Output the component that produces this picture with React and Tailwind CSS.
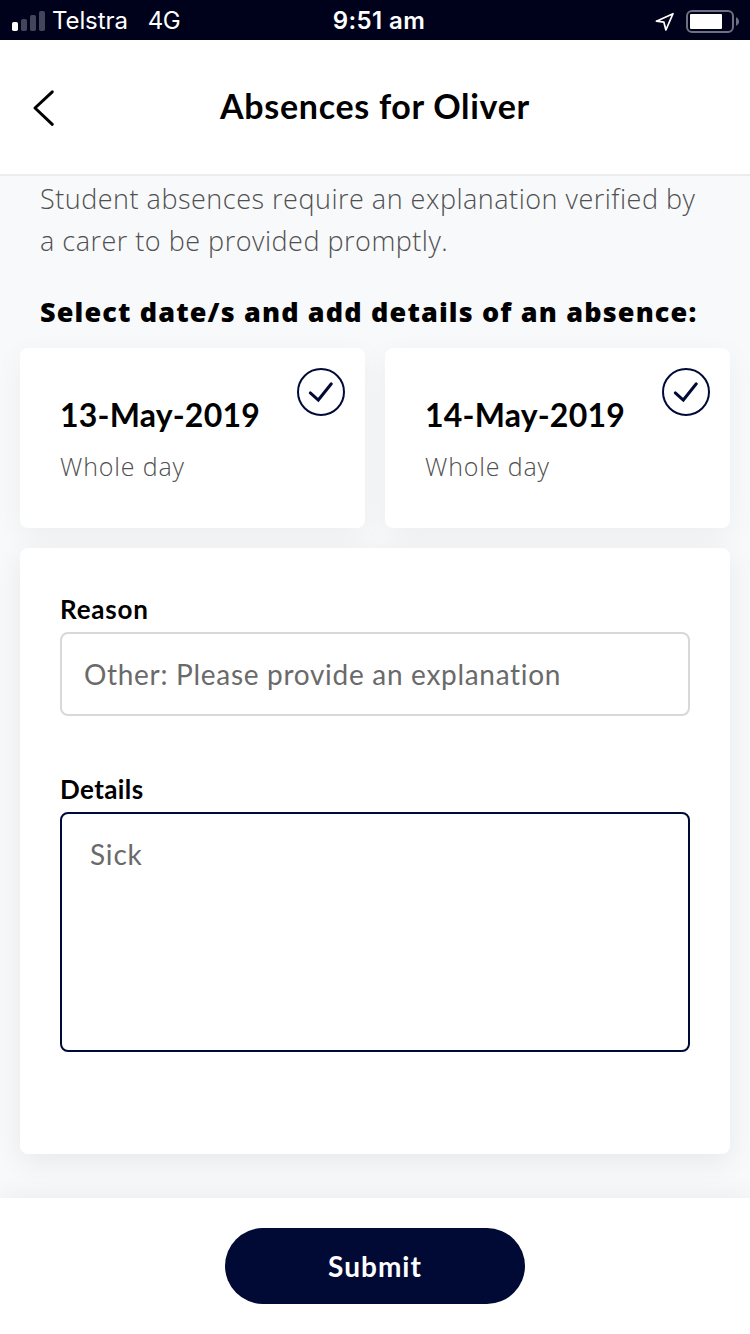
import React from 'react';

function SignalIcon() {
  return (
    <svg className="h-5 w-[33px] shrink-0" viewBox="0 0 33 20">
      <rect x="0" y="11" width="6" height="9" rx="1.8" fill="#fff" />
      <rect x="9" y="8" width="6" height="12" rx="1.8" fill="#43455a" />
      <rect x="18" y="4" width="6" height="16" rx="1.8" fill="#43455a" />
      <rect x="27" y="0" width="6" height="20" rx="1.8" fill="#43455a" />
    </svg>
  );
}

function LocationIcon() {
  return (
    <svg className="h-5 w-5 shrink-0" viewBox="0 0 20 20" fill="none" stroke="#fff" strokeWidth="1.7" strokeLinejoin="round">
      <path d="M18 2.700 L1.400 10.200 L8.900 11.200 L10.900 19 Z" />
    </svg>
  );
}

function BatteryIcon() {
  return (
    <svg className="h-6 w-[54px] shrink-0" viewBox="0 0 54 24" fill="none">
      <rect x="1" y="2" width="46" height="21" rx="5" stroke="#6f7183" strokeWidth="2" />
      <rect x="4" y="5" width="32" height="15" rx="1" fill="#fff" />
      <path d="M50 8.200 C52 9 53 10.500 53 12.500 C53 14.500 52 16 50 16.800 Z" fill="#6f7183" />
    </svg>
  );
}

function StatusBar() {
  return (
    <div className="grid h-10 grid-cols-3 items-center bg-[#00021c] font-['Inter','Liberation_Sans',sans-serif] text-2xl leading-10 text-white">
      <div className="flex items-center pl-3">
        <SignalIcon />
        <span className="pt-px pl-[7px] tracking-[-0.1px]">Telstra</span>
        <span className="pt-px pl-5 tracking-[-0.6px]">4G</span>
      </div>
      <div className="pt-px pl-2 text-center font-semibold tracking-[0.4px]">9:51 am</div>
      <div className="flex items-center justify-end gap-[11px] pr-[10px]">
        <LocationIcon />
        <BatteryIcon />
      </div>
    </div>
  );
}

function DateCard({ date, duration }) {
  return (
    <div className="flex h-[180px] flex-1 justify-between rounded-lg bg-white pr-5 pl-10 shadow-[0_8px_30px_rgba(0,0,0,0.05)]">
      <div className="pt-[47px]">
        <div className="text-[32px] leading-10 font-bold tracking-[0.2px] text-black">{date}</div>
        <div className="pt-[13px] font-['Open_Sans',sans-serif] text-[25px] leading-9 font-light tracking-[0.850px] text-[#505050]">{duration}</div>
      </div>
      <svg className="mt-5 size-12 shrink-0" viewBox="0 0 48 48" fill="none" stroke="#000a35">
        <circle cx="24" cy="24" r="23" strokeWidth="2" />
        <path d="M13.300 24.900 L21.300 32 L34.300 15.800" strokeWidth="3" strokeLinecap="round" />
      </svg>
    </div>
  );
}

export default function App() {
  return (
    <div className="flex h-[1334px] w-[750px] flex-col overflow-hidden bg-[#f8f9fb] font-['Lato','Open_Sans',sans-serif]">
      <StatusBar />
      <header className="grid h-[136px] grid-cols-[60px_1fr_60px] items-center border-b-2 border-[#ececec] bg-white">
        <svg className="mt-0.5 ml-8 h-[38px] w-6" viewBox="0 0 24 38" fill="none" stroke="#000" strokeWidth="3" strokeLinecap="round" strokeLinejoin="round">
          <path d="M20.300 2.800 L3 19 L20.300 35.300" />
        </svg>
        <h1 className="pb-0.5 text-center text-[34px] leading-10 font-bold tracking-[0.7px] text-black">Absences for Oliver</h1>
      </header>
      <main className="flex flex-1 flex-col px-5">
        <p className="px-5 pt-[2px] font-['Open_Sans',sans-serif] text-[27px] leading-[42px] font-light tracking-[0.500px] whitespace-nowrap text-[#505050]">
          Student absences require an explanation verified by
          <br />a carer to be provided promptly.
        </p>
        <h2 className="px-5 pt-[30px] font-['Open_Sans',sans-serif] text-[27px] leading-10 font-extrabold tracking-[1.150px] whitespace-nowrap text-black">
          Select date/s and add details of an absence:
        </h2>
        <section className="flex gap-5 pt-4">
          <DateCard date="13-May-2019" duration="Whole day" />
          <DateCard date="14-May-2019" duration="Whole day" />
        </section>
        <section className="mt-5 flex h-[606px] flex-col rounded-lg bg-white px-10 pt-[43px] shadow-[0_8px_30px_rgba(0,0,0,0.07)]">
          <label className="text-[26px] leading-9 font-bold tracking-[0.8px] text-black">Reason</label>
          <div className="mt-[5px] flex h-[84px] items-center rounded-lg border-2 border-[#d8d8d8] px-[22px] text-[28px] leading-10 font-normal tracking-[0.7px] text-[#6a6a6a]">
            Other: Please provide an explanation
          </div>
          <label className="mt-[55px] text-[26px] leading-9 font-bold tracking-[0.4px] text-black">Details</label>
          <div className="mt-[5px] h-[240px] rounded-lg border-2 border-[#000a35] px-7 pt-5 text-[28px] leading-10 font-normal tracking-[0.8px] text-[#6a6a6a]">
            Sick
          </div>
        </section>
      </main>
      <footer className="flex h-[136px] shrink-0 justify-center bg-white pt-[30px] shadow-[0_-4px_24px_rgba(0,0,0,0.05)]">
        <button className="h-[76px] w-[300px] rounded-full bg-[#000a35] text-[28px] leading-10 font-bold tracking-[1px] text-white">Submit</button>
      </footer>
    </div>
  );
}
